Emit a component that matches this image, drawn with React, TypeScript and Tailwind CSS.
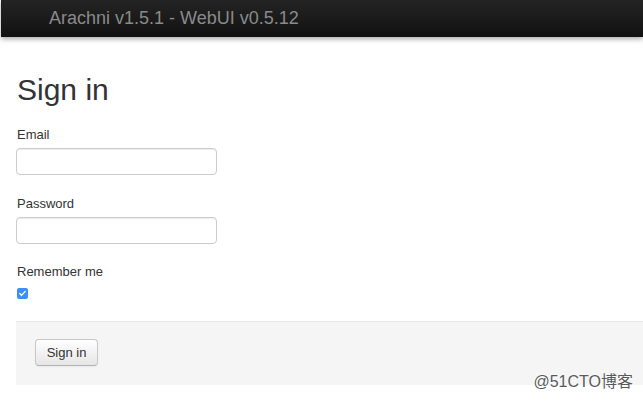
import React from "react";

export default function App() {
  return (
    <div
      className="relative w-[643px] h-[401px] bg-white overflow-hidden text-[#333]"
      style={{ fontFamily: '"Liberation Sans", Arial, sans-serif' }}
    >
      <div className="ml-px h-[37px] bg-gradient-to-b from-[#242424] to-[#111111] shadow-[0_2px_5px_rgba(0,0,0,0.35)] flex items-center pl-[48px]">
        <span className="text-[18px] leading-[37px] text-[#8a8a8a]">
          Arachni v1.5.1 - WebUI v0.5.12
        </span>
      </div>

      <div className="pl-[16px]">
        <h1 className="mt-[33px] ml-px text-[30px] leading-[40px] font-normal text-[#333]">
          Sign in
        </h1>

        <div className="mt-[15px] flex flex-col">
          <label className="ml-px text-[13px] leading-[20px] mb-[3px]">Email</label>
          <div className="w-[201px] h-[27px] border border-[#cccccc] rounded-[4px] shadow-[inset_0_1px_1px_rgba(0,0,0,0.075)] bg-white" />

          <label className="ml-px mt-[19px] text-[13px] leading-[20px] mb-[3px]">Password</label>
          <div className="w-[201px] h-[27px] border border-[#cccccc] rounded-[4px] shadow-[inset_0_1px_1px_rgba(0,0,0,0.075)] bg-white" />

          <label className="ml-px mt-[18px] text-[13px] leading-[20px]">Remember me</label>
          <div className="mt-[6px] ml-px w-[11px] h-[11px] rounded-[2px] bg-[#3c8ff7] flex items-center justify-center">
            <svg width="9" height="9" viewBox="0 0 9 9">
              <path d="M1.8 4.6 L3.6 6.4 L7.2 2.4" fill="none" stroke="white" strokeWidth="1.4" strokeLinecap="round" strokeLinejoin="round" />
            </svg>
          </div>
        </div>

        <div className="mt-[22px] h-[64px] bg-[#f5f5f5] border-t border-[#e8e8e8] pt-[17px] pl-[19px]">
          <button className="w-[63px] h-[27px] rounded-[4px] border border-[#c8c8c8] border-b-[#b3b3b3] bg-gradient-to-b from-white to-[#e6e6e6] text-[13px] text-[#333] shadow-[0_1px_2px_rgba(0,0,0,0.05)]">
            Sign in
          </button>
        </div>
      </div>

      <div
        className="absolute right-[10px] top-[372px] text-[16px] leading-[20px] text-[#5a5a5a] [text-shadow:0_0_2px_white,0_0_2px_white]"
        style={{ fontFamily: '"Liberation Sans", "Noto Sans CJK SC", sans-serif' }}
      >
        @51CTO博客
      </div>
    </div>
  );
}
